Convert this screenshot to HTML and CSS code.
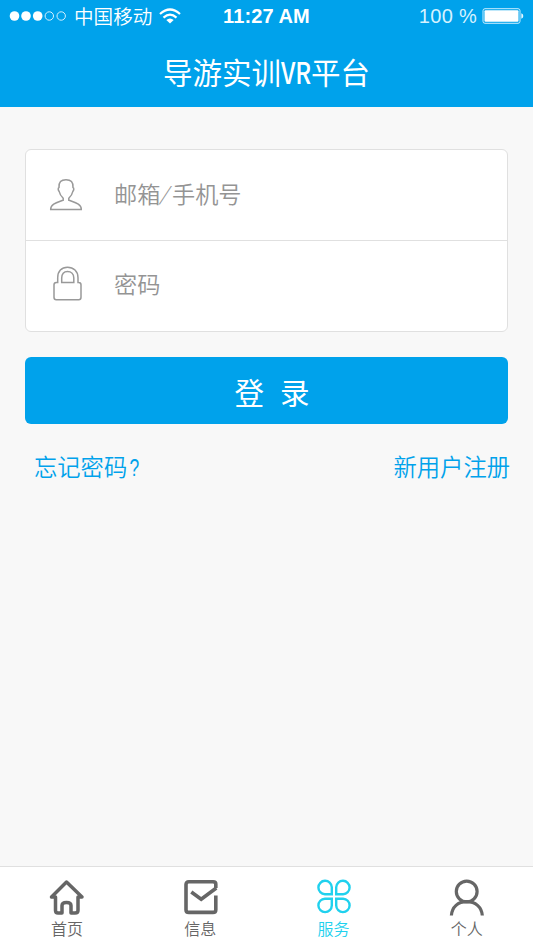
FILE: index.html
```html
<!DOCTYPE html>
<html lang="zh-CN">
<head>
<meta charset="utf-8">
<title>导游实训VR平台</title>
<link rel="stylesheet" href="styles.css">
</head>
<body>
<div class="screen">
  <header class="header">
    <div class="status">
      <div class="carrier">
        <svg class="dots" width="58" height="12" viewBox="0 0 58 12"><g fill="#fff"><circle cx="5.5" cy="6" r="4.8"/><circle cx="17" cy="6" r="4.8"/><circle cx="28.7" cy="6" r="4.8"/></g><g fill="none" stroke="#d5f1ff" stroke-width="1"><circle cx="40.3" cy="6" r="4.2"/><circle cx="52.2" cy="6" r="4.2"/></g></svg>
        <span class="operator">中国移动</span>
        <svg class="wifi" width="22" height="16" viewBox="0 0 22 16"><g fill="none" stroke="#fff" stroke-width="2.2"><path d="M1 6Q11-3 21 6"/><path d="M4.5 9.6Q11 3.7 17.5 9.6"/></g><path d="M7.3 12Q11 8.8 14.7 12L11 15.5Z" fill="#fff"/></svg>
      </div>
      <span class="time">11:27 AM</span>
      <div class="power">
        <span class="percent">100 %</span>
        <svg width="42" height="16" viewBox="0 0 42 16"><rect x="1" y=".7" width="37" height="14.6" rx="2" fill="none" stroke="#c8edff"/><rect x="2.5" y="2.2" width="34" height="11.6" rx="1" fill="#fff"/><path d="M39.3 5.2Q41.3 6 41.3 8T39.3 10.8Z" fill="#e5f7ff"/></svg>
      </div>
    </div>
    <h1 class="title">导游实训<span class="latin">VR</span>平台</h1>
  </header>
  <main class="main">
    <div class="card">
      <div class="field">
        <svg class="field-icon user" width="36" height="36" viewBox="0 0 36 36"><path d="M18 2.700C13 2.700 10.700 5 11 10.500C9.800 11 10 13 11.200 14.500C11.700 17.500 13.500 19.500 15.200 21.200V23.200C9 25.500 2.500 27 2.700 32.500H33.300C33.500 27 27 25.500 20.800 23.200V21.200C22.500 19.500 24.300 17.500 24.800 14.500C26 13 26.200 11 25 10.500C25.300 5 23 2.700 18 2.700Z"/></svg>
        <span class="hint">邮箱<span class="slash">/</span>手机号</span>
      </div>
      <div class="field">
        <svg class="field-icon lock" width="36" height="36" viewBox="0 0 36 36"><path d="M8.700 16.500V11.800C8.700 5.200 12.500 1.300 18.500 1.300S29 5.200 29 11.800V16.500H29.700Q32 16.500 32 18.800V31.200Q32 33.700 29.700 33.700H7.300Q5 33.700 5 31.200V18.800Q5 16.500 7.300 16.500Z"/><path d="M12.700 16.500V12C12.700 8 14.800 5.600 18.500 5.600S24.800 8 24.800 12V16.500Z"/></svg>
        <span class="hint">密码</span>
      </div>
    </div>
    <div class="login"><span>登</span><span>录</span></div>
    <div class="links"><span>忘记密码<span class="question">?</span></span><span>新用户注册</span></div>
  </main>
  <nav class="tabs">
    <div class="tab">
      <svg width="36" height="38" viewBox="0 0 36 38"><path d="M17.500 3L2.500 18H6.500V31.500Q6.500 34 9 34H13V26.500Q13 23.500 17.500 23.500T22 26.500V34H26Q29 34 29 31.500V18H33Z" stroke-width="3.500" stroke-linejoin="round"/></svg>
      <span>首页</span>
    </div>
    <div class="tab">
      <svg width="36" height="38" viewBox="0 0 36 38"><path d="M33.800 9V5Q33.800 2.800 31.200 2.800H6.800Q4 2.800 4 5.500V30.700Q4 33.400 6.800 33.400H31Q33.800 33.400 33.800 30.700V16.500" stroke-width="3.600"/><path d="M9.300 13L19.200 20.200L34.300 9" stroke-width="3.600"/></svg>
      <span>信息</span>
    </div>
    <div class="tab active">
      <svg width="36" height="38" viewBox="0 0 36 38"><path d="M15.800 15.200H8.900A6.700 6.700 0 1 1 15.800 8.200ZM20.200 15.200V8.200A6.700 6.700 0 1 1 27.100 15.200ZM15.800 19.700V26.500A6.700 6.700 0 1 1 8.900 19.700ZM20.200 19.700H27.100A6.700 6.700 0 1 1 20.200 26.500Z" stroke-width="2.400"/></svg>
      <span>服务</span>
    </div>
    <div class="tab">
      <svg width="36" height="38" viewBox="0 0 36 38"><circle cx="17.700" cy="12.500" r="10.400" stroke-width="3.200"/><path d="M2.400 36.500C3 28 9 22.700 17.700 22.700S32.700 28 33.300 36.500" stroke-width="3.200"/></svg>
      <span>个人</span>
    </div>
  </nav>
</div>
</body>
</html>
```
FILE: styles.css
```css
* { box-sizing: border-box; }
body {
  margin: 0;
  font-family: "Liberation Sans", "Noto Sans CJK SC", sans-serif;
  font-weight: 350;
}
svg { display: block; flex: none; }
.screen {
  width: 533px;
  height: 948px;
  display: flex;
  flex-direction: column;
  background: #f8f8f8;
  overflow: hidden;
}
.header { height: 106.500px; flex: none; background: #00a2eb; color: #fff; }
.status {
  height: 32px;
  padding: 0 9px;
  display: grid;
  grid-template-columns: 1fr auto 1fr;
  align-items: center;
}
.carrier, .power { display: flex; align-items: center; }
.power { justify-content: flex-end; gap: 5px; }
.operator { margin: 0 7px; padding-top: 2px; font-size: 19.600px; line-height: 30px; white-space: nowrap; }
.time { font-size: 20px; font-weight: 700; letter-spacing: .1px; }
.percent { font-size: 20px; letter-spacing: .3px; color: #d5f2ff; white-space: nowrap; }
.title {
  margin: 0;
  height: 78px;
  display: flex;
  justify-content: center;
  font-family: "Noto Sans CJK SC", sans-serif;
  font-size: 29.500px;
  font-weight: 400;
  line-height: 78px;
}
.latin { width: 30px; display: flex; justify-content: center; font-weight: 500; transform: scaleX(.82); }
.main { flex: 1; padding: 42px 25px 0; }
.card {
  height: 183px;
  border: 1.500px solid #e0e0e0;
  border-radius: 6px;
  background: #fff;
}
.field { height: 90px; padding-left: 23px; display: flex; align-items: center; }
.field + .field { height: 91px; border-top: 1px solid #e0e0e0; }
.field-icon { fill: none; stroke: #999; stroke-width: 1.500; }
.user { margin: 1px 1px 0 -1px; }
.lock { margin-top: -3px; }
.hint { margin-left: 29px; font-size: 23.200px; color: #949494; display: flex; line-height: 36px; }
.field + .field .hint { margin-top: -2px; }
.slash { width: 11.600px; display: flex; justify-content: center; font-family: "Noto Sans CJK SC", sans-serif; font-weight: 300; transform: translateY(-2px) skewX(-14deg) scaleY(.82); }
.login {
  height: 67px;
  margin-top: 25.500px;
  display: flex;
  justify-content: center;
  align-items: center;
  gap: 16px;
  border-radius: 6px;
  background: #00a2eb;
  color: #fff;
  font-size: 29.500px;
  font-weight: 400;
  padding: 1px 0 0 11px;
}
.links {
  margin: 26px -2px 0 9px;
  display: flex;
  justify-content: space-between;
  color: #00a2eb;
  font-size: 23.300px;
  line-height: 36px;
}
.question { display: inline-block; margin-left: 1px; transform: scaleX(.75); }
.tabs {
  height: 82px;
  flex: none;
  display: grid;
  grid-template-columns: repeat(4, 1fr);
  border-top: 1.500px solid #e0e0e0;
  background: #fff;
  color: #666;
}
.tab {
  padding: 12px 0 0 1px;
  display: flex;
  flex-direction: column;
  align-items: center;
  gap: 1px;
  font-size: 16px;
  line-height: 24px;
}
.tab svg { fill: none; stroke: currentColor; }
.active { color: #20d1ee; }
```
